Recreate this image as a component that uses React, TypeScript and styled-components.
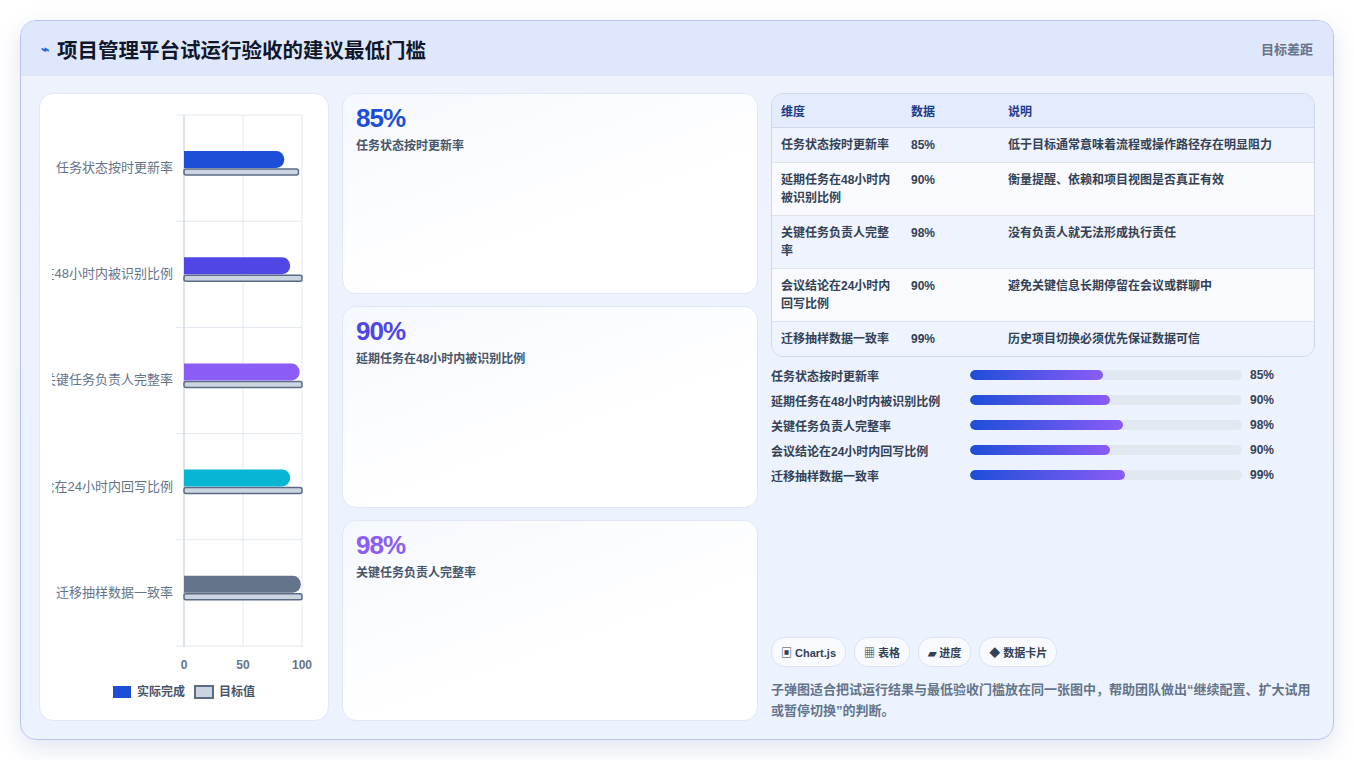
import React from "react";
import styled, { createGlobalStyle } from "styled-components";

const G = createGlobalStyle`
  *, *::before, *::after { box-sizing: border-box; }
  body { margin:0; background:#fff; font-family: "Liberation Sans","Noto Sans CJK SC",sans-serif; }
`;
const Page = styled.div`padding:20px; height:760px;`;
const Frame = styled.div`
  height:720px; border:1px solid #b9c3ee; border-radius:16px; overflow:hidden;
  background:linear-gradient(180deg,#eef2fd,#ecf3fe); box-shadow:0 8px 24px rgba(90,110,180,.18);
  display:flex; flex-direction:column;
`;
const Header = styled.div`
  height:55px; flex:none; background:#dfe7fd; display:flex; align-items:center; justify-content:space-between;
  padding:0 20px;
`;
const Title = styled.h1`margin:0; font-size:20.5px; font-weight:700; color:#0f172a; display:flex; align-items:center; gap:8px;`;
const Bolt = styled.span`color:#2563eb; font-size:14px;`;
const HeadRight = styled.span`font-size:13px; color:#64748b; font-weight:600;`;
const Body = styled.div`flex:1; display:flex; gap:13px; padding:17px 18px 18px 18px; min-height:0;`;
const ChartCard = styled.div`width:290px; flex:none; background:#fff; border:1px solid #e2e8f0; border-radius:14px; overflow:hidden;`;
const Cards = styled.div`width:416px; flex:none; display:flex; flex-direction:column; gap:12px;`;
const Stat = styled.div`flex:1; background:linear-gradient(160deg,#f5f8ff,#fff 60%); border:1px solid #e0e7f7; border-radius:14px; padding:9px 13px;`;
const StatVal = styled.div<{ c: string }>`font-size:26px; font-weight:700; color:${p => p.c}; letter-spacing:-1px; line-height:30px;`;
const StatLabel = styled.div`font-size:12px; color:#475569; font-weight:600; margin-top:3px;`;
const Right = styled.div`flex:1; display:flex; flex-direction:column; min-width:0;`;
const Table = styled.table`width:100%; border-collapse:separate; border-spacing:0; border:1px solid #cfd8ea; border-radius:12px; overflow:hidden; font-size:12px;`;
const Th = styled.th`text-align:left; font-weight:700; color:#1e3a8a; background:#e3ebfd; padding:8px 9px; border-bottom:1px solid #cfd8ea; height:33px;`;
const Tr = styled.tr<{ alt: boolean }>`background:${p => (p.alt ? "#f8faff" : "#eef3fe")};`;
const Td = styled.td<{ w?: number; last?: boolean }>`
  padding:8px 9px; color:#334155; font-weight:600; vertical-align:top; line-height:18px;
  ${p => (p.w ? `width:${p.w}px;` : "")} ${p => (p.last ? "" : "border-bottom:1px solid #dde4f0;")}
`;
const Bars = styled.div`display:flex; flex-direction:column; gap:7px; margin-top:9px;`;
const BarRow = styled.div`display:flex; align-items:center; height:18px; font-size:12px; font-weight:600; color:#334155;`;
const BarLabel = styled.div`width:199px; flex:none;`;
const Track = styled.div`width:272px; height:10px; background:#e2e8f0; border-radius:5px; overflow:hidden;`;
const Fill = styled.div`height:100%; border-radius:5px; background:linear-gradient(90deg,#1d4ed8,#8b5cf6);`;
const Pct = styled.div`margin-left:8px;`;
const Spacer = styled.div`flex:1;`;
const Chips = styled.div`display:flex; gap:8px;`;
const Chip = styled.span`font-size:11px; font-weight:600; color:#334155; background:#f8faff; border:1px solid #dbe3f3; border-radius:14px; padding:6px 9px;`;
const Note = styled.p`margin:12px 0 0; font-size:13px; line-height:21px; color:#64748b; font-weight:600;`;

const rows = [
  ["任务状态按时更新率", "85%", "低于目标通常意味着流程或操作路径存在明显阻力"],
  ["延期任务在48小时内被识别比例", "90%", "衡量提醒、依赖和项目视图是否真正有效"],
  ["关键任务负责人完整率", "98%", "没有负责人就无法形成执行责任"],
  ["会议结论在24小时内回写比例", "90%", "避免关键信息长期停留在会议或群聊中"],
  ["迁移抽样数据一致率", "99%", "历史项目切换必须优先保证数据可信"],
];
const fills = [133, 140, 153, 140, 155];
const cols = ["#1d4ed8", "#4f46e5", "#8b5cf6", "#06b6d4", "#64748b"];
const vals = [85, 90, 98, 90, 99];

function Chart() {
  const x0 = 144, sc = 1.18, top = 21, rh = 106.2;
  return (
    <svg width="290" height="627" viewBox="0 0 290 627" fontFamily="Liberation Sans, Noto Sans CJK SC, sans-serif">
      <defs><clipPath id="lc"><rect x="12" y="0" width="278" height="627" /></clipPath></defs>
      {[0, 50, 100].map(v => <line key={v} x1={x0 + v * sc} x2={x0 + v * sc} y1={top} y2={553} stroke="#e2e8f0" />)}
      {[0, 1, 2, 3, 4, 5].map(i => <line key={i} x1={136} x2={262} y1={top + i * rh} y2={top + i * rh} stroke="#e2e8f0" />)}
      <line x1={x0} x2={x0} y1={top} y2={553} stroke="#cbd5e1" />
      {rows.map((r, i) => {
        const cy = top + i * rh + 53;
        const w = vals[i] * sc;
        const tw = 100 * sc;
        return (
          <g key={i}>
            <text x={133} y={cy + 4} textAnchor="end" fontSize="13" fill="#64748b" clipPath="url(#lc)">{r[0]}</text>
            <rect x={x0} y={cy + 1} width={tw * (i === 0 ? 0.97 : 1)} height={6} rx={2} fill="#cbd5e1" stroke="#5b6b85" strokeWidth={1.5} />
            <path d={`M${x0} ${cy - 17} h${w - 8} a8 8.5 0 0 1 0 17 h${-(w - 8)} z`} fill={cols[i]} />
          </g>
        );
      })}
      {[0, 50, 100].map(v => <text key={v} x={x0 + v * sc} y={575} textAnchor="middle" fontSize="12" fontWeight="700" fill="#64748b">{v}</text>)}
      <rect x={73} y={592} width={18} height={12} fill="#1d4ed8" />
      <text x={97} y={602} fontSize="12" fontWeight="700" fill="#475569">实际完成</text>
      <rect x={155} y={592} width={18} height={12} fill="#cbd5e1" stroke="#5b6b85" strokeWidth={2} />
      <text x={179} y={602} fontSize="12" fontWeight="700" fill="#475569">目标值</text>
    </svg>
  );
}

export default function App() {
  return (
    <Page>
      <G />
      <Frame>
        <Header>
          <Title><Bolt>⌁</Bolt>项目管理平台试运行验收的建议最低门槛</Title>
          <HeadRight>目标差距</HeadRight>
        </Header>
        <Body>
          <ChartCard><Chart /></ChartCard>
          <Cards>
            {[0, 1, 2].map(i => (
              <Stat key={i}>
                <StatVal c={cols[i]}>{rows[i][1]}</StatVal>
                <StatLabel>{rows[i][0]}</StatLabel>
              </Stat>
            ))}
          </Cards>
          <Right>
            <Table>
              <thead><tr><Th>维度</Th><Th>数据</Th><Th>说明</Th></tr></thead>
              <tbody>
                {rows.map((r, i) => (
                  <Tr key={i} alt={i % 2 === 1}>
                    <Td w={130} last={i === 4}>{r[0]}</Td>
                    <Td w={97} last={i === 4}>{r[1]}</Td>
                    <Td last={i === 4}>{r[2]}</Td>
                  </Tr>
                ))}
              </tbody>
            </Table>
            <Bars>
              {rows.map((r, i) => (
                <BarRow key={i}>
                  <BarLabel>{r[0]}</BarLabel>
                  <Track><Fill style={{ width: fills[i] }} /></Track>
                  <Pct>{r[1]}</Pct>
                </BarRow>
              ))}
            </Bars>
            <Spacer />
            <Chips>
              <Chip>▣ Chart.js</Chip><Chip>▦ 表格</Chip><Chip>▰ 进度</Chip><Chip>◆ 数据卡片</Chip>
            </Chips>
            <Note>子弹图适合把试运行结果与最低验收门槛放在同一张图中，帮助团队做出“继续配置、扩大试用或暂停切换”的判断。</Note>
          </Right>
        </Body>
      </Frame>
    </Page>
  );
}
